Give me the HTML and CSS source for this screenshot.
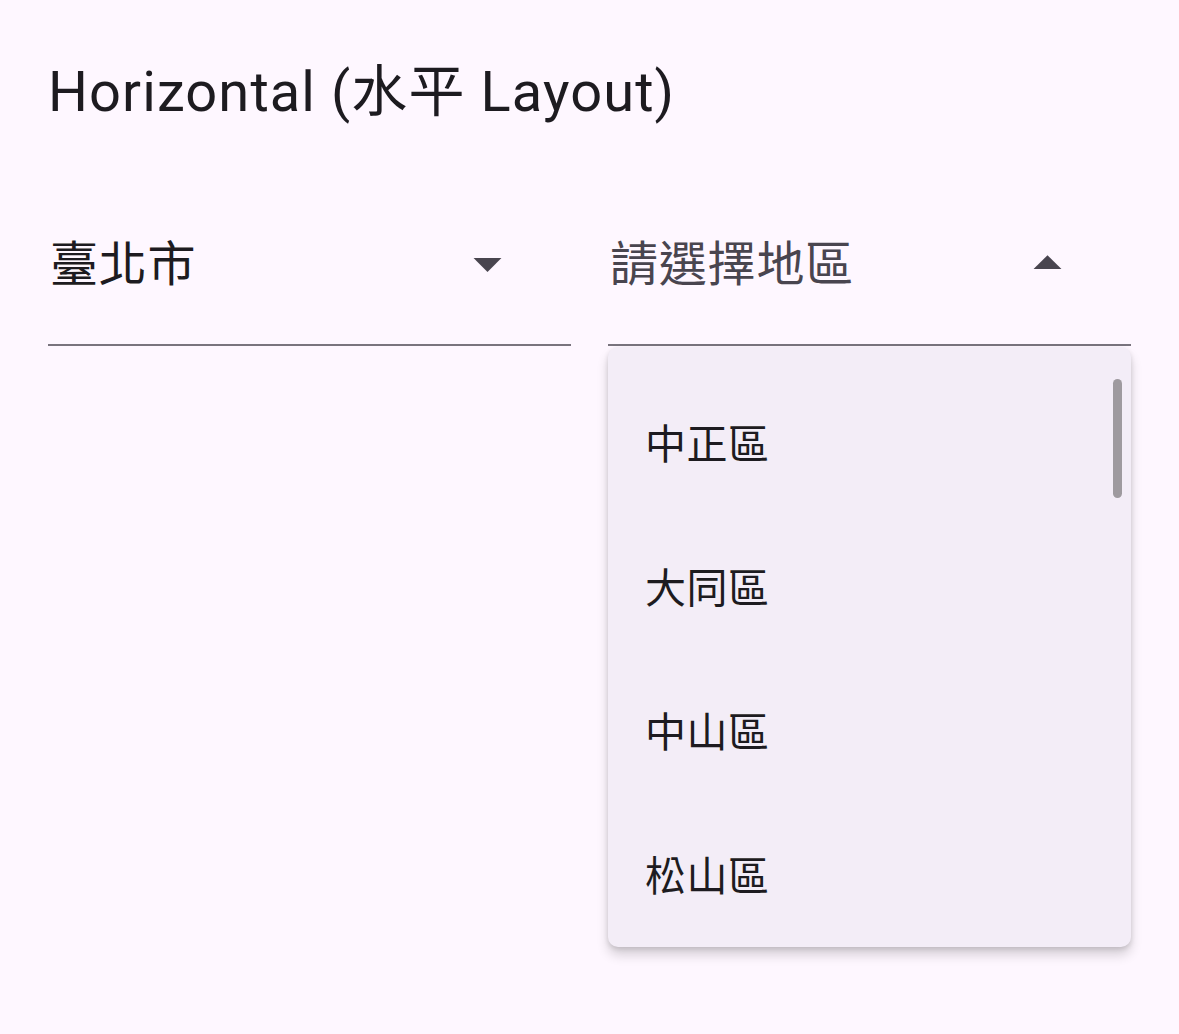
FILE: index.html
```html
<!DOCTYPE html>
<html lang="zh-Hant">
<head>
  <meta charset="UTF-8" />
  <meta name="viewport" content="width=device-width, initial-scale=1.0"/>
  <title>Horizontal Layout</title>
  <link rel="stylesheet" href="styles.css">
</head>
<body>
  <div class="page">
    <h1 class="title">Horizontal (水平 Layout)</h1>

    <div class="row">
      <div class="field">
        <span class="value">臺北市</span>
        <svg class="arrow" viewBox="0 0 24 24"><path d="M7 10l5 5 5-5z"/></svg>
      </div>

      <div class="field open">
        <span class="value hint">請選擇地區</span>
        <svg class="arrow" viewBox="0 0 24 24"><path d="M7 14l5-5 5 5z"/></svg>

        <div class="menu">
          <div class="scrollbar"></div>
          <div class="item">中正區</div>
          <div class="item">大同區</div>
          <div class="item">中山區</div>
          <div class="item">松山區</div>
        </div>
      </div>
    </div>
  </div>
</body>
</html>
```

FILE: styles.css
```css
* {
  margin: 0;
  padding: 0;
  box-sizing: border-box;
  font-family: Roboto, "Noto Sans CJK TC", sans-serif;
}

body {
  background-color: #fef7ff;
  color: #1d1b20;
}

.page {
  min-height: 1034px;
  padding: 60px 48px;
}

.title {
  font-size: 56px;
  font-weight: 400;
  line-height: 64px;
  letter-spacing: 1.1px;
}

.row {
  display: grid;
  grid-template-columns: 1fr 1fr;
  gap: 37px;
  margin-top: 62px;
}

.field {
  position: relative;
  height: 160px;
  display: flex;
  align-items: center;
  justify-content: space-between;
  border-bottom: 2px solid #79747e;
}

.value {
  font-size: 48px;
  line-height: 48px;
  padding-left: 2px;
  letter-spacing: 0.8px;
}

.value.hint {
  color: #49454f;
}

.arrow {
  width: 67px;
  height: 67px;
  margin-right: 50px;
  margin-top: -4px;
  fill: #49454f;
}

/* menu desplegado bajo el campo */
.menu {
  position: absolute;
  top: calc(100% + 3px);
  left: 0;
  right: 0;
  height: 600px;
  overflow: hidden;
  padding-top: 22px;
  background: #f3edf7;
  border-radius: 10px;
  box-shadow: 0 8px 12px rgba(0, 0, 0, 0.16), 0 2px 5px rgba(0, 0, 0, 0.12);
  z-index: 2;
}

.item {
  height: 144px;
  display: flex;
  align-items: center;
  padding-left: 37px;
  font-size: 41px;
  letter-spacing: 0.5px;
  color: #1d1b20;
}

.scrollbar {
  position: absolute;
  top: 32px;
  right: 9px;
  width: 9px;
  height: 119px;
  border-radius: 5px;
  background: #9e9a9f;
}
```
